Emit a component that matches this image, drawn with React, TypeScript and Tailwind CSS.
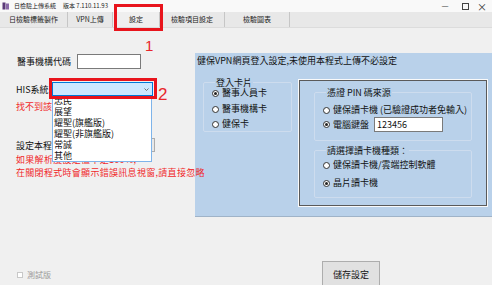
import React from 'react';

const font = { fontFamily: '"Noto Sans CJK TC", "Noto Sans", sans-serif' };

function Radio({ checked, label, className = '' }: { checked?: boolean; label: string; className?: string }) {
  return (
    <div className={`flex items-center h-[12px] ${className}`}>
      <span className="w-[7px] h-[7px] rounded-full border border-[#333] bg-white flex items-center justify-center shrink-0">
        {checked && <span className="w-[3px] h-[3px] rounded-full bg-[#222]" />}
      </span>
      <span className="ml-[3px] text-[9px] leading-[12px] text-[#111] whitespace-nowrap">{label}</span>
    </div>
  );
}

function Group({ title, className = '', children }: { title: string; className?: string; children: React.ReactNode }) {
  return (
    <fieldset className={`border border-[#cddcee] rounded-[2px] ${className}`}>
      <legend className="ml-[3px] px-[1px] text-[9px] leading-[11px] text-[#111]">{title}</legend>
      {children}
    </fieldset>
  );
}

const tabs = [
  { label: '日檢驗標籤製作', w: 'w-[68px]' },
  { label: 'VPN上傳', w: 'w-[45px]' },
  { label: '設定', w: 'w-[47px]' },
  { label: '檢驗項目設定', w: 'w-[65px]' },
  { label: '檢驗圖表', w: 'w-[65px]' },
];

const hisItems = ['忠民', '展望', '耀聖(旗艦版)', '耀聖(非旗艦版)', '常誠', '其他'];

export default function App() {
  return (
    <div className="w-[492px] h-[285px] bg-[#f0f0f0] relative overflow-hidden flex flex-col text-[#111]" style={font}>
      {/* title bar */}
      <div className="h-[12px] bg-[#f9f9f9] flex items-center shrink-0">
        <svg width="8" height="8" viewBox="0 0 8 8" className="ml-[2px]">
          <rect x="0.5" y="0.5" width="3" height="7" fill="#5b3a78" />
          <rect x="4" y="1.5" width="3" height="6" fill="#8a6aa8" />
        </svg>
        <span className="ml-[4px] text-[6px] leading-[8px] text-[#222]">日檢驗上傳系統</span>
        <span className="ml-[7px] text-[6px] leading-[8px] text-[#222]">版本 7.110.11.93</span>
        <div className="ml-auto flex items-center text-[#333] pr-[2px]">
          <span className="w-[22px] text-center text-[8px] leading-[10px]">—</span>
          <span className="w-[18px] flex justify-center">
            <span className="w-[7px] h-[7px] border border-[#444]" />
          </span>
          <span className="w-[16px] text-center text-[10px] leading-[11px]">×</span>
        </div>
      </div>

      {/* tab bar */}
      <div className="h-[16px] bg-[#e8e8e8] flex shrink-0 border-b border-[#dcdcdc]">
        {tabs.map((t, i) => (
          <div
            key={t.label}
            className={`${t.w} flex items-center justify-center border-r border-[#c6c6c6] text-[7px] leading-[9px] text-[#222] ${i === 2 ? 'bg-[#efefef]' : ''}`}
          >
            {t.label}
          </div>
        ))}
      </div>

      {/* body */}
      <div className="flex h-[189px] shrink-0">
        <div className="w-[195px] relative">
          <div className="mt-[26px] h-[15px] flex items-center pl-[17px]">
            <span className="w-[60px] text-[9px] leading-[11px]">醫事機構代碼</span>
            <div className="w-[64px] h-[15px] bg-white border border-[#7a7a7a]" />
          </div>
          <div className="mt-[13px] h-[14px] flex items-center pl-[16px]">
            <span className="w-[36px] text-[9px] leading-[11px]">HIS系統</span>
            <div className="w-[101px] h-[14px] bg-[#cce8ff] border border-[#0078d7] flex items-center justify-end pr-[3px]">
              <svg width="5" height="3" viewBox="0 0 5 3"><path d="M0.5 0.5 L2.5 2.5 L4.5 0.5" stroke="#555" fill="none" strokeWidth="0.8" /></svg>
            </div>
          </div>
          <div className="mt-[6px] h-[10px] pl-[16px] text-[9px] leading-[10px] text-[#f0282a] whitespace-nowrap">找不到該系統</div>
          <div className="mt-[26px] h-[14px] flex items-center pl-[16px]">
            <span className="w-[36px] text-[9px] leading-[11px] whitespace-nowrap">設定本程</span>
            <div className="w-[103px] h-[14px] bg-[#e8e8e8] border border-[#acacac] flex items-center justify-end pr-[2px]">
              <svg width="5" height="3" viewBox="0 0 5 3"><path d="M0.5 0.5 L2.5 2.5 L4.5 0.5" stroke="#666" fill="none" strokeWidth="0.8" /></svg>
            </div>
          </div>
          <div className="mt-[1px] pl-[16px] text-[9px] leading-[13px] text-[#f0282a] whitespace-nowrap tracking-[0.3px]">
            <div>如果解析度設定值不是100%,</div>
            <div>在關閉程式時會顯示錯誤訊息視窗,請直接忽略</div>
          </div>

          {/* open dropdown list */}
          <div className="absolute left-[52px] top-[70px] w-[100px] h-[64px] bg-white border border-[#7eb4ea] overflow-hidden">
            <div className="-mt-[4px] pl-[1px]">
              {hisItems.map((h) => (
                <div key={h} className="h-[11px] text-[9px] leading-[11px] text-[#111] whitespace-nowrap">{h}</div>
              ))}
            </div>
          </div>
        </div>

        {/* blue panel */}
        <div className="flex-1 mt-[25px] h-[164px] bg-[#b9d1ea] border-b border-[#9fb3c8] flex flex-col">
          <div className="pl-[2px] pt-[2px] text-[9px] leading-[12px] whitespace-nowrap">健保VPN網頁登入設定,未使用本程式上傳不必設定</div>
          <div className="mt-[12px] flex items-start">
            <Group title="登入卡片" className="ml-[8px] mt-[-2px] w-[89px] h-[55px] pl-[8px]">
              <Radio checked label="醫事人員卡" className="mt-[-1px]" />
              <Radio label="醫事機構卡" className="mt-[4px]" />
              <Radio label="健保卡" className="mt-[3px]" />
            </Group>
            <div className="ml-[6px] w-[190px] h-[128px] border border-[#fafafa]">
              <div className="w-full h-full border border-[#5a5a5a] flex flex-col">
                <Group title="憑證 PIN 碼來源" className="ml-[14px] mt-[6px] w-[158px] h-[54px] pl-[8px]">
                  <Radio label="健保讀卡機 (已驗證成功者免輸入)" className="mt-[6px]" />
                  <div className="mt-[1px] flex items-center">
                    <Radio checked label="電腦鍵盤" />
                    <div className="ml-[5px] w-[69px] h-[15px] bg-white border border-[#7a7a7a] text-[9px] leading-[13px] pl-[2px]">123456</div>
                  </div>
                </Group>
                <Group title="請選擇讀卡機種類：" className="ml-[14px] mt-[4px] w-[158px] h-[53px] pl-[8px]">
                  <Radio label="健保讀卡機/雲端控制軟體" className="mt-[3px]" />
                  <Radio checked label="晶片讀卡機" className="mt-[6px]" />
                </Group>
              </div>
            </div>
          </div>
        </div>
      </div>

      {/* bottom row */}
      <div className="mt-[44px] h-[26px] flex items-start shrink-0">
        <div className="ml-[17px] mt-[9px] flex items-center w-[305px]">
          <span className="w-[6px] h-[6px] border border-[#c8c8c8] bg-white" />
          <span className="ml-[4px] text-[8px] leading-[10px] text-[#9a9a9a]">測試版</span>
        </div>
        <div className="w-[58px] h-[26px] bg-[#e1e1e1] border border-[#adadad] flex items-center justify-center text-[9px] leading-[11px]">儲存設定</div>
      </div>

      {/* annotations */}
      <div className="absolute left-[114px] top-[4px] w-[49px] h-[27px] border-[3px] border-[#e8141c]" />
      <div className="absolute left-[145px] top-[37px] text-[15px] leading-[17px] text-[#e8262b]" style={{ fontFamily: '"Liberation Sans", sans-serif' }}>1</div>
      <div className="absolute left-[49px] top-[78px] w-[108px] h-[21px] border-[3px] border-[#e8141c]" />
      <div className="absolute left-[158px] top-[86px] text-[17px] leading-[18px] text-[#e8262b]" style={{ fontFamily: '"Liberation Sans", sans-serif' }}>2</div>
    </div>
  );
}
